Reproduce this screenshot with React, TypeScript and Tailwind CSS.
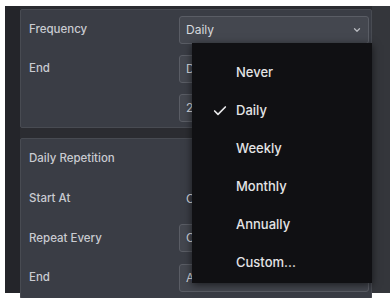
import { ChevronDown, Check } from "lucide-react";

const font = { fontFamily: "Inter, 'Open Sans', sans-serif" };

function Row({ label, tall, children }: { label: string; tall?: boolean; children?: React.ReactNode }) {
    return (
        <div className={tall ? "flex h-[39.7px] items-center" : "flex h-[39px] items-center"}>
            <div className="w-[158px] pl-[8px] text-[11.5px] font-medium text-[#c9cbd1]">{label}</div>
            <div className="flex-1 pr-[2px]">{children}</div>
        </div>
    );
}

function Box({ text, chevron }: { text: string; chevron?: boolean }) {
    return (
        <div className="flex h-[28px] items-center justify-between rounded-[3px] border border-[#5a5d65] bg-[#44474f] px-[6px] text-[12px] text-[#d6d8dd]">
            <span>{text}</span>
            {chevron && <ChevronDown className="h-[10px] w-[10px] text-[#b8bac0]" strokeWidth={3} />}
        </div>
    );
}

const options = ["Never", "Daily", "Weekly", "Monthly", "Annually", "Custom..."];

export default function App() {
    return (
        <div className="h-[298px] w-[390px] bg-white pt-[6px] pb-[5px] pl-[5px]" style={font}>
            <div className="relative flex h-full bg-[#2b2c31]">
                <div className="w-[15px] bg-[#24252a]" />
                <div className="flex w-[352px] flex-col gap-[10px] pt-[3px] pb-[3px]">
                    <div className="flex flex-col rounded-[2px] border border-[#484b52] bg-[#3a3d45]">
                        <Row label="Frequency">
                            <Box text="Daily" chevron />
                        </Row>
                        <Row label="End">
                            <Box text="Daily" />
                        </Row>
                        <Row label="">
                            <Box text="2" />
                        </Row>
                    </div>
                    <div className="flex flex-1 flex-col rounded-[2px] border border-[#484b52] bg-[#3a3d45]">
                        <Row label="Daily Repetition" tall />
                        <Row label="Start At" tall>
                            <div className="h-[28px] px-[7px] text-[12px] leading-[28px] text-[#d6d8dd]">Once</div>
                        </Row>
                        <Row label="Repeat Every" tall>
                            <Box text="Once" />
                        </Row>
                        <Row label="End" tall>
                            <Box text="After" />
                        </Row>
                    </div>
                </div>
                <div className="flex-1 bg-[#34363b]" />

                <div className="absolute top-[37px] left-[187px] flex h-[240px] w-[180px] flex-col bg-[#101013] pt-[11px] shadow-[0_2px_8px_rgba(0,0,0,0.6)]">
                    {options.map((o) => (
                        <div key={o} className="flex h-[38px] items-center text-[13px] font-medium text-[#e4e4e6]">
                            <div className="flex w-[44px] justify-end pr-[8px]">
                                {o === "Daily" && <Check className="h-[16px] w-[16px] text-[#e8e8ea]" strokeWidth={2.5} />}
                            </div>
                            <span>{o}</span>
                        </div>
                    ))}
                </div>
            </div>
        </div>
    );
}
